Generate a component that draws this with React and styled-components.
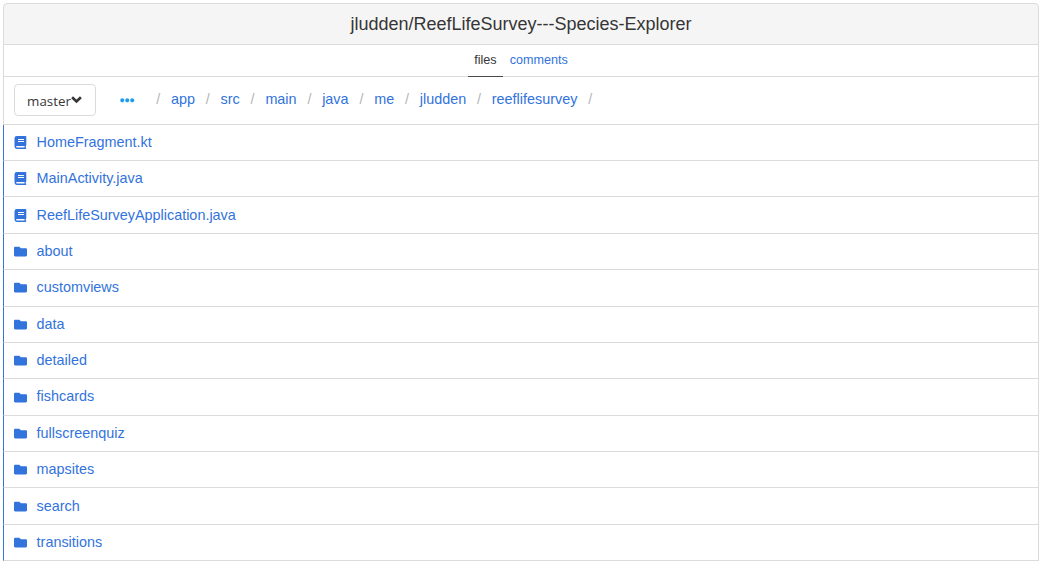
import React from "react";
import styled, { createGlobalStyle } from "styled-components";
import { FaFolder, FaEllipsisH } from "react-icons/fa";

const GlobalStyle = createGlobalStyle`
  *, *::before, *::after { box-sizing: border-box; }
  body {
    margin: 0;
    padding: 3px 5px 0 3px;
    background: #fff;
    color: #363636;
    font-family: "Liberation Sans", Arial, sans-serif;
    font-size: 14.4px;
    line-height: 22px;
  }
  a { color: #3273dc; text-decoration: none; }
`;

const Panel = styled.nav`
  display: flex;
  flex-direction: column;
`;

const Heading = styled.h1`
  margin: 0;
  height: 42px;
  display: flex;
  align-items: center;
  justify-content: center;
  padding-top: 1px;
  border: 1px solid #dbdbdb;
  border-radius: 4px 4px 0 0;
  background: #f5f5f5;
  font-size: 18px;
  line-height: 27px;
  font-weight: 400;
`;

const Tabs = styled.div`
  height: 32px;
  display: flex;
  justify-content: center;
  border: 1px solid #dbdbdb;
  border-top: 0;
  font-size: 12.6px;
  line-height: 19px;
`;

const Tab = styled.a`
  height: 32px;
  padding: 6px 6.5px 0;
  border-bottom: 1px solid ${(p) => (p.$active ? "#4a4a4a" : "#dbdbdb")};
  && { color: ${(p) => (p.$active ? "#363636" : "#3273dc")}; }
`;

const Toolbar = styled.div`
  height: 47.7px;
  display: flex;
  align-items: flex-start;
  padding: 7px 10px 0;
  border: 1px solid #dbdbdb;
  border-top: 0;
`;

const BranchButton = styled.button`
  width: 82px;
  height: 32px;
  display: flex;
  align-items: center;
  justify-content: center;
  padding: 2px 1px 0 0;
  border: 1px solid #dbdbdb;
  border-radius: 4px;
  background: #fff;
  color: #363636;
  font: 13.33px/20px "Open Sans", sans-serif;

  svg { margin-top: -4px; }
`;

const More = styled.a`
  display: flex;
  margin: 9px 21.7px 0 24px;
  && { color: #209cee; }
`;

const Crumbs = styled.ul`
  display: flex;
  margin: 0;
  padding: 4px 0 0;
  list-style: none;
`;

const Crumb = styled.li`
  &::before { content: "/"; color: #b5b5b5; }
  a { padding: 0 10.8px; }
`;

const Row = styled.a`
  height: 36.375px;
  display: flex;
  align-items: center;
  gap: 9.6px;
  padding-left: 10px;
  border: 1px solid #dbdbdb;
  border-top: 0;
  border-left-color: #3273dc;
`;

const Name = styled.span`
  align-self: flex-start;
  margin-top: 6.12px;
`;

const IconSlot = styled.span`
  width: 13px;
  display: flex;
  justify-content: center;
`;

const Book = () => (
  <svg width="13" height="13" viewBox="0 0 13 13" fill="currentColor">
    <path
      fillRule="evenodd"
      d="M2.8 0H11.6Q12.3 0 12.3 .7V9.2Q12.3 9.6 11.9 9.8Q11.6 10.8 11.9 11.7Q12.3 11.9 12.3 12.3Q12.3 13 11.6 13H2.8Q.5 13 .5 10.6V2.4Q.5 0 2.8 0ZM4 3V4H10V3ZM4 5V6H10V5ZM2.9 9.9Q2.1 9.9 2.1 10.7Q2.1 11.5 2.9 11.5H10.6Q10.4 10.7 10.6 9.9Z"
    />
  </svg>
);

const Chevron = () => (
  <svg width="11" height="11" viewBox="0 0 11 11" fill="none" stroke="currentColor" strokeWidth="2.7">
    <path d="M1.1 3.3L5.5 7.4L9.9 3.3" />
  </svg>
);

const Folder = () => <FaFolder size={13} />;

const path = ["app", "src", "main", "java", "me", "jludden", "reeflifesurvey"];
const files = ["HomeFragment.kt", "MainActivity.java", "ReefLifeSurveyApplication.java"];
const folders = [
  "about", "customviews", "data", "detailed", "fishcards",
  "fullscreenquiz", "mapsites", "search", "transitions",
];

function Entry({ icon: Icon, name }) {
  return (
    <Row href="#">
      <IconSlot><Icon /></IconSlot>
      <Name>{name}</Name>
    </Row>
  );
}

export default function App() {
  return (
    <>
      <GlobalStyle />
      <Panel>
        <Heading>jludden/ReefLifeSurvey---Species-Explorer</Heading>
        <Tabs>
          <Tab href="#" $active>files</Tab>
          <Tab href="#">comments</Tab>
        </Tabs>
        <Toolbar>
          <BranchButton>master<Chevron /></BranchButton>
          <More href="#" aria-label="Parent folders"><FaEllipsisH size={14.5} /></More>
          <Crumbs>
            {path.map((p) => <Crumb key={p}><a href="#">{p}</a></Crumb>)}
            <Crumb />
          </Crumbs>
        </Toolbar>
        {files.map((f) => <Entry key={f} icon={Book} name={f} />)}
        {folders.map((f) => <Entry key={f} icon={Folder} name={f} />)}
      </Panel>
    </>
  );
}
